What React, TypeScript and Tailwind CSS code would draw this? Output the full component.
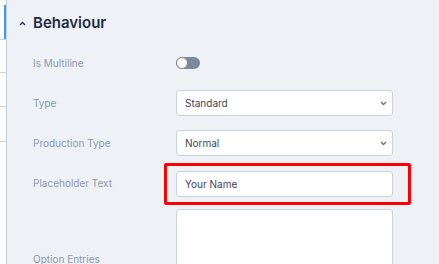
import { useState } from 'react';

function Chevron({ up }: { up?: boolean }) {
    return (
        <svg width="7" height="5" viewBox="0 0 7 5" className="shrink-0">
            <polyline
                points={up ? '1,4 3.5,1.5 6,4' : '1,1 3.5,3.5 6,1'}
                fill="none"
                stroke={up ? '#2d3650' : '#6b7385'}
                strokeWidth="1.4"
            />
        </svg>
    );
}

function Row({ label, children }: { label: string; children: React.ReactNode }) {
    return (
        <div className="flex items-center h-10">
            <div className="w-[143px] shrink-0 text-[10px] text-[#8d98aa]">{label}</div>
            {children}
        </div>
    );
}

function Select({ value }: { value: string }) {
    return (
        <div className="w-[217px] h-[26px] bg-white border border-[#c9d3e0] rounded-[3px] flex items-center justify-between pl-2 pr-[5px] text-[10px] text-[#3d3f60]">
            <span>{value}</span>
            <Chevron />
        </div>
    );
}

export default function App() {
    const [multiline, setMultiline] = useState(false);
    const [name, setName] = useState('Your Name');

    return (
        <div className="flex h-[264px] w-[439px] overflow-hidden bg-[#eef2f6] font-['Inter',sans-serif]">
            {/* side list */}
            <div className="w-[7px] shrink-0 bg-white border-r border-[#c5d0de] flex flex-col">
                <div className="h-[40px] pt-[5px] flex justify-end border-b border-[#c8d2df]">
                    <div className="w-[2px] bg-[#3b9cf0]" />
                </div>
                <div className="h-[33px] border-b border-[#c8d2df]" />
                <div className="h-[34px] border-b border-[#c8d2df]" />
                <div className="h-[35px] border-b border-[#c8d2df]" />
            </div>

            <div className="flex-1 pl-[26px]">
                <div className="h-[43px] flex items-center gap-[7px] -ml-[14px] pt-[4px]">
                    <Chevron up />
                    <h2 className="text-[15px] font-semibold text-[#1f2a44]">Behaviour</h2>
                </div>

                <Row label="Is Multiline">
                    <button
                        onClick={() => setMultiline(!multiline)}
                        className="w-6 h-3 rounded-full bg-[#7c889b] relative"
                    >
                        <span className={`absolute top-0 w-3 h-3 rounded-full bg-white border border-[#7c889b] ${multiline ? 'right-0' : 'left-0'}`} />
                    </button>
                </Row>

                <Row label="Type">
                    <Select value="Standard" />
                </Row>

                <Row label="Production Type">
                    <Select value="Normal" />
                </Row>

                <Row label="Placeholder Text">
                    <div className="relative">
                        <input
                            value={name}
                            onChange={(e) => setName(e.target.value)}
                            className="w-[217px] h-[26px] bg-white border border-[#c9d3e0] rounded-[3px] px-2 text-[10px] text-[#3d3f60] outline-none"
                        />
                        {/* highlight annotation */}
                        <div className="absolute -left-3 -right-[18px] -top-[7px] -bottom-2 border-[3px] border-[#ff0000] rounded-[2px] pointer-events-none" />
                    </div>
                </Row>

                <div className="flex items-start">
                    <div className="w-[143px] shrink-0 mt-[51px] text-[10px] leading-[10px] text-[#8d98aa]">Option Entries</div>
                    <textarea className="w-[217px] h-[100px] mt-[6px] bg-white border border-[#c9d3e0] rounded-[3px] resize-none" />
                </div>
            </div>
        </div>
    );
}
